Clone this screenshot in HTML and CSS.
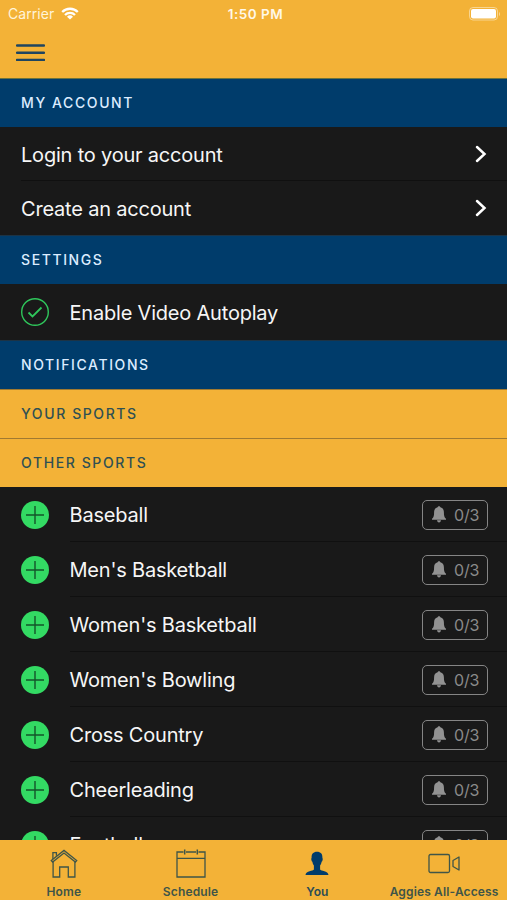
FILE: index.html
```html
<!DOCTYPE html>
<html lang="en">
  <head>
    <meta charset="UTF-8" />
    <meta name="viewport" content="width=device-width, initial-scale=1" />
    <title>You</title>
    <link rel="stylesheet" href="styles.css">
  </head>
  <body>
    <!-- shared icons -->
    <svg class="sprite" width="0" height="0" aria-hidden="true">
      <symbol id="chevron" viewBox="0 0 12 18">
        <path d="M2 2l7.5 7L2 16" fill="none" stroke="#fff" stroke-width="2.5" stroke-linecap="round" />
      </symbol>
      <symbol id="plus" viewBox="0 0 28 28">
        <circle cx="14" cy="14" r="14" fill="#33da63" />
        <path d="M14 5v18M5 14h18" stroke="#14542a" stroke-width="1.4" />
      </symbol>
      <symbol id="bell" viewBox="0 0 14 17">
        <path d="M7 .2c-.8 0-1.200.4-1.400 1.100C3.200 2 2.100 3.800 2.100 6.200c0 3.600-.4 5.200-2.100 6.600v1h14v-1c-1.700-1.400-2.100-3-2.100-6.600 0-2.400-1.100-4.200-3.500-4.900C8.200.6 7.800.2 7 .2z" fill="#929292" />
        <path d="M5 14.300h4c-.2 1.400-.9 2.100-2 2.100s-1.800-.7-2-2.100z" fill="#929292" />
      </symbol>
    </svg>

    <div class="screen">
      <header class="top-bar">
        <div class="status">
          <div class="carrier">
            <span>Carrier</span>
            <svg width="18" height="13" viewBox="0 0 18 13">
              <g fill="none" stroke="#fff" stroke-width="2.300">
                <path d="M1.200 5a11 11 0 0 1 15.600 0" />
                <path d="M4 8a7 7 0 0 1 10 0" />
              </g>
              <path d="M9 12.500L6 9.700a4.300 4.300 0 0 1 6 0z" fill="#fff" />
            </svg>
          </div>
          <span class="time">1:50 PM</span>
          <svg class="battery" width="32" height="14" viewBox="0 0 32 14">
            <rect x=".5" y=".5" width="28" height="12.500" rx="3.500" fill="none" stroke="#fff" stroke-opacity=".45" />
            <rect x="2" y="2" width="25" height="9.500" rx="2" fill="#fff" />
            <path d="M30 5v4c1.300-.5 1.300-3.500 0-4z" fill="#fff" fill-opacity=".5" />
          </svg>
        </div>
        <div class="menu-btn" role="button" aria-label="Menu">
          <svg width="29" height="18" viewBox="0 0 29 18">
            <path d="M1 1.500h27M1 8.700h27M1 15.900h27" stroke="#1f4560" stroke-width="2.400" stroke-linecap="round" />
          </svg>
        </div>
      </header>

      <main class="content">
        <h2 class="section">MY ACCOUNT</h2>
        <div class="link-row line">
          <span>Login to your account</span>
          <svg width="12" height="18"><use href="#chevron" /></svg>
        </div>
        <div class="link-row">
          <span>Create an account</span>
          <svg width="12" height="18"><use href="#chevron" /></svg>
        </div>

        <h2 class="section">SETTINGS</h2>
        <div class="item setting">
          <svg class="item-icon" width="28" height="28" viewBox="0 0 28 28">
            <g fill="none" stroke="#2fc65b">
              <circle cx="14" cy="14" r="13.300" stroke-width="1.400" />
              <path d="M7.500 14.500l4 4 9-9" stroke-width="1.800" />
            </g>
          </svg>
          <div class="item-body"><span>Enable Video Autoplay</span></div>
        </div>

        <h2 class="section">NOTIFICATIONS</h2>
        <h3 class="section gold">YOUR SPORTS</h3>
        <h3 class="section gold">OTHER SPORTS</h3>

        <div class="item">
          <svg class="item-icon" width="28" height="28"><use href="#plus" /></svg>
          <div class="item-body">
            <span>Baseball</span>
            <div class="alerts"><svg width="14" height="17"><use href="#bell" /></svg>0/3</div>
          </div>
        </div>
        <div class="item">
          <svg class="item-icon" width="28" height="28"><use href="#plus" /></svg>
          <div class="item-body">
            <span>Men's Basketball</span>
            <div class="alerts"><svg width="14" height="17"><use href="#bell" /></svg>0/3</div>
          </div>
        </div>
        <div class="item">
          <svg class="item-icon" width="28" height="28"><use href="#plus" /></svg>
          <div class="item-body">
            <span>Women's Basketball</span>
            <div class="alerts"><svg width="14" height="17"><use href="#bell" /></svg>0/3</div>
          </div>
        </div>
        <div class="item">
          <svg class="item-icon" width="28" height="28"><use href="#plus" /></svg>
          <div class="item-body">
            <span>Women's Bowling</span>
            <div class="alerts"><svg width="14" height="17"><use href="#bell" /></svg>0/3</div>
          </div>
        </div>
        <div class="item">
          <svg class="item-icon" width="28" height="28"><use href="#plus" /></svg>
          <div class="item-body">
            <span>Cross Country</span>
            <div class="alerts"><svg width="14" height="17"><use href="#bell" /></svg>0/3</div>
          </div>
        </div>
        <div class="item">
          <svg class="item-icon" width="28" height="28"><use href="#plus" /></svg>
          <div class="item-body">
            <span>Cheerleading</span>
            <div class="alerts"><svg width="14" height="17"><use href="#bell" /></svg>0/3</div>
          </div>
        </div>
        <div class="item">
          <svg class="item-icon" width="28" height="28"><use href="#plus" /></svg>
          <div class="item-body">
            <span>Football</span>
            <div class="alerts"><svg width="14" height="17"><use href="#bell" /></svg>0/3</div>
          </div>
        </div>
      </main>

      <nav class="tabs">
        <div class="tab">
          <svg width="30" height="30" viewBox="0 0 30 30">
            <g fill="none" stroke="#3f5548" stroke-width="1.300">
              <path d="M2.300 11.500L15 1.400l12.700 10.100-1.300 1.500L15 4.100 3.600 13z" />
              <path d="M3.900 10V3.700h3.500v3" />
              <path d="M4.100 13v15h6.600V18h8.600v10h6.600V13" />
            </g>
          </svg>
          <span>Home</span>
        </div>
        <div class="tab">
          <svg width="30" height="30" viewBox="0 0 30 30">
            <g fill="none" stroke="#3f5548" stroke-width="1.300">
              <path d="M7.500 3H1v25h28V3h-6.500M10 3h10M1 9.300h28" />
              <path d="M8.700.5v5M21.300.5v5" stroke-width="1.500" />
            </g>
          </svg>
          <span>Schedule</span>
        </div>
        <div class="tab active">
          <svg width="30" height="30" viewBox="0 0 30 30">
            <path d="M15 2.800c-3.700 0-5.500 2.200-5.400 5.600 0 .7-.5 1-.3 2 .2 1.200.5 1.900 1.100 2.400.3 1.700.8 2.800 1.500 3.600v4.200c-.8 1.700-7.900 1.300-8.400 5.400h23c-.5-4.100-7.600-3.700-8.400-5.400v-4.200c.7-.8 1.200-1.900 1.500-3.600.6-.5.9-1.200 1.100-2.400.2-1-.3-1.300-.3-2 .1-3.400-1.700-5.600-5.400-5.600z" fill="#003c6b" />
          </svg>
          <span>You</span>
        </div>
        <div class="tab">
          <svg width="32" height="30" viewBox="0 0 32 30">
            <g fill="none" stroke="#3f5548" stroke-width="1.300" stroke-linejoin="round">
              <rect x="1" y="5.500" width="20.500" height="18" rx="1.500" />
              <path d="M31 8v13l-6-3.500v-6z" />
            </g>
          </svg>
          <span>Aggies All-Access</span>
        </div>
      </nav>
    </div>
  </body>
</html>
```
FILE: styles.css
```css
* {
  box-sizing: border-box;
}
body {
  margin: 0;
  font-family: Inter, "Liberation Sans", sans-serif;
  background: #191919;
  color: #f6f6f6;
}
svg {
  display: block;
  flex-shrink: 0;
}
.sprite {
  position: absolute;
}
.screen {
  height: 900px;
  display: flex;
  flex-direction: column;
  overflow: hidden;
}
.top-bar {
  height: 78px;
  flex-shrink: 0;
  background: #f3b237;
}
.status {
  height: 27px;
  padding: 0 6px 0 8px;
  display: grid;
  grid-template-columns: 1fr auto 1fr;
  align-items: center;
  font-size: 14px;
}
.carrier {
  display: flex;
  align-items: center;
  gap: 7px;
  color: #fff4da;
  letter-spacing: 0.05px;
}
.time {
  padding-left: 2px;
  font-weight: 600;
  font-size: 13.5px;
  letter-spacing: 0.5px;
  color: #fff8e8;
}
.battery {
  justify-self: end;
}
.menu-btn {
  width: 29px;
  margin: 17px 0 0 16px;
}
.content {
  flex: 1;
  min-height: 0;
  overflow: hidden;
}
.section {
  height: 49px;
  margin: 0;
  padding: 0 0 2px 21px;
  display: flex;
  align-items: center;
  background: #003c6b;
  border-top: 1px solid #1c3345;
  color: #dcecff;
  font-size: 14px;
  font-weight: 500;
  letter-spacing: 1.6px;
}
.section:first-child {
  border-top-color: #6b733f;
}
.section.gold {
  background: #f3b237;
  border-top-color: #a17a31;
  color: #2f5053;
}
.link-row {
  height: 54px;
  margin-left: 21px;
  padding-right: 20px;
  display: flex;
  align-items: center;
  justify-content: space-between;
  font-size: 20px;
  letter-spacing: -0.2px;
}
.link-row.line {
  border-bottom: 1px solid #101010;
}
.link-row span,
.item-body span {
  padding-top: 2px;
}
.item {
  height: 55px;
  padding-left: 21px;
  display: flex;
  align-items: center;
  font-size: 20px;
  letter-spacing: -0.2px;
}
.item-icon {
  margin-left: -0.5px;
}
.item-body {
  flex: 1;
  height: 100%;
  margin-left: 21px;
  padding-right: 19px;
  display: flex;
  align-items: center;
  justify-content: space-between;
  border-bottom: 1px solid #101010;
}
.setting {
  height: 56px;
}
.setting .item-body {
  border-bottom: none;
}
.alerts {
  width: 66px;
  height: 30px;
  margin-top: 1px;
  padding-left: 9px;
  display: flex;
  align-items: center;
  gap: 8px;
  border: 1px solid #858585;
  border-radius: 5px;
  color: #8a8a8a;
  font-size: 16px;
}
.tabs {
  height: 60px;
  flex-shrink: 0;
  display: grid;
  grid-template-columns: repeat(4, 1fr);
  background: #f3b237;
}
.tab {
  padding: 9px 0 0 1px;
  display: flex;
  flex-direction: column;
  align-items: center;
  gap: 5px;
  color: #3f5548;
  font-size: 12px;
  font-weight: 600;
  line-height: 15px;
  letter-spacing: 0.15px;
  white-space: nowrap;
}
.tab.active {
  color: #2b4c55;
}
```
